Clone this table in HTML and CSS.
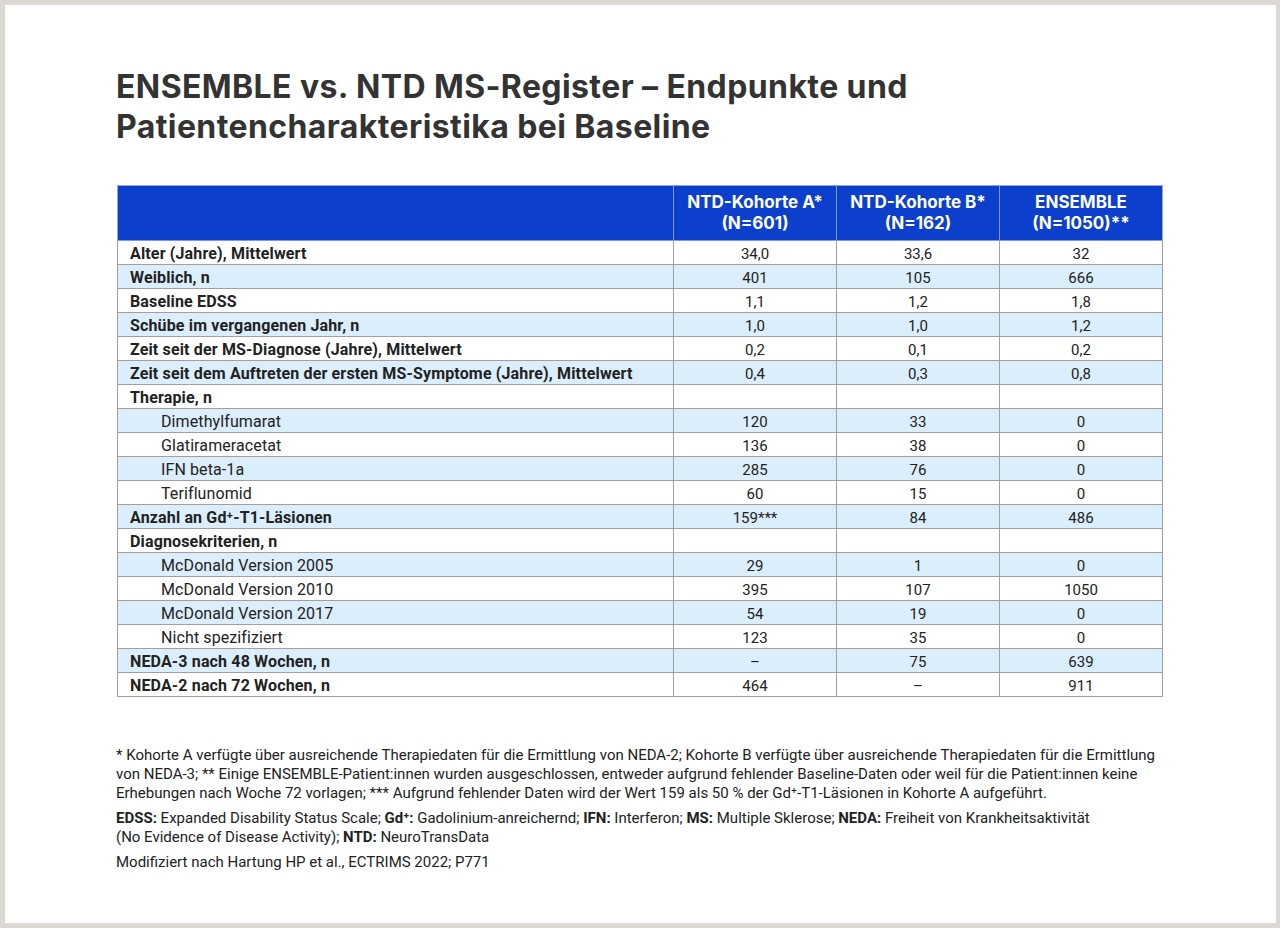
FILE: index.html
```html
<!DOCTYPE html>
<html lang="de">
<head>
<meta charset="utf-8">
<link rel="stylesheet" href="styles.css">
</head>
<body>
<div class="frame">
  <main class="card">
    <h1 class="title">ENSEMBLE vs. NTD MS-Register – Endpunkte und<br>Patientencharakteristika bei Baseline</h1>
    <table class="data">
      <thead>
        <tr>
          <th class="c-label"></th>
          <th>NTD-Kohorte A*<br>(N=601)</th>
          <th>NTD-Kohorte B*<br>(N=162)</th>
          <th>ENSEMBLE<br>(N=1050)**</th>
        </tr>
      </thead>
      <tbody>
        <tr><td class="lbl">Alter (Jahre), Mittelwert</td><td>34,0</td><td>33,6</td><td>32</td></tr>
        <tr><td class="lbl">Weiblich, n</td><td>401</td><td>105</td><td>666</td></tr>
        <tr><td class="lbl">Baseline EDSS</td><td>1,1</td><td>1,2</td><td>1,8</td></tr>
        <tr><td class="lbl">Schübe im vergangenen Jahr, n</td><td>1,0</td><td>1,0</td><td>1,2</td></tr>
        <tr><td class="lbl">Zeit seit der MS-Diagnose (Jahre), Mittelwert</td><td>0,2</td><td>0,1</td><td>0,2</td></tr>
        <tr><td class="lbl">Zeit seit dem Auftreten der ersten MS-Symptome (Jahre), Mittelwert</td><td>0,4</td><td>0,3</td><td>0,8</td></tr>
        <tr><td class="lbl">Therapie, n</td><td></td><td></td><td></td></tr>
        <tr><td class="sub">Dimethylfumarat</td><td>120</td><td>33</td><td>0</td></tr>
        <tr><td class="sub">Glatirameracetat</td><td>136</td><td>38</td><td>0</td></tr>
        <tr><td class="sub">IFN beta-1a</td><td>285</td><td>76</td><td>0</td></tr>
        <tr><td class="sub">Teriflunomid</td><td>60</td><td>15</td><td>0</td></tr>
        <tr><td class="lbl">Anzahl an Gd⁺-T1-Läsionen</td><td>159***</td><td>84</td><td>486</td></tr>
        <tr><td class="lbl">Diagnosekriterien, n</td><td></td><td></td><td></td></tr>
        <tr><td class="sub">McDonald Version 2005</td><td>29</td><td>1</td><td>0</td></tr>
        <tr><td class="sub">McDonald Version 2010</td><td>395</td><td>107</td><td>1050</td></tr>
        <tr><td class="sub">McDonald Version 2017</td><td>54</td><td>19</td><td>0</td></tr>
        <tr><td class="sub">Nicht spezifiziert</td><td>123</td><td>35</td><td>0</td></tr>
        <tr><td class="lbl">NEDA-3 nach 48 Wochen, n</td><td>–</td><td>75</td><td>639</td></tr>
        <tr><td class="lbl">NEDA-2 nach 72 Wochen, n</td><td>464</td><td>–</td><td>911</td></tr>
      </tbody>
    </table>
    <div class="notes">
      <p>* Kohorte A verfügte über ausreichende Therapiedaten für die Ermittlung von NEDA-2; Kohorte B verfügte über ausreichende Therapiedaten für die Ermittlung von NEDA-3; ** Einige ENSEMBLE-Patient:innen wurden ausgeschlossen, entweder aufgrund fehlender Baseline-Daten oder weil für die Patient:innen keine Erhebungen nach Woche 72 vorlagen; *** Aufgrund fehlender Daten wird der Wert 159 als 50 % der Gd⁺-T1-Läsionen in Kohorte A aufgeführt.</p>
      <p><b>EDSS:</b> Expanded Disability Status Scale; <b>Gd⁺:</b> Gadolinium-anreichernd; <b>IFN:</b> Interferon; <b>MS:</b> Multiple Sklerose; <b>NEDA:</b> Freiheit von Krankheitsaktivität<br>(No Evidence of Disease Activity); <b>NTD:</b> NeuroTransData</p>
      <p>Modifiziert nach Hartung HP et al., ECTRIMS 2022; P771</p>
    </div>
  </main>
</div>
</body>
</html>
```

FILE: styles.css
```css
* { box-sizing: border-box; }
html, body { margin: 0; padding: 0; }
body {
  background: #dcd8d3;
  font-family: Roboto, "Liberation Sans", sans-serif;
  color: #333;
}
.frame {
  width: 1280px;
  height: 928px;
  padding: 5px 4px 5px 5px;
}
.card {
  background: #fff;
  height: 918px;
  padding: 62px 112px 0 111px;
}
.title {
  margin: 0;
  font-family: Inter, "Liberation Sans", sans-serif;
  font-weight: 700;
  font-size: 32px;
  line-height: 40px;
  color: #333;
  letter-spacing: 0.4px;
}
.data {
  margin-top: 38px;
  margin-left: 1px;
  width: 1046px;
  border-collapse: collapse;
  font-size: 15px;
  color: #222;
}
.data th {
  background: #0c3fcb;
  color: #fff;
  font-family: Inter, "Liberation Sans", sans-serif;
  font-weight: 700;
  font-size: 17px;
  line-height: 21px;
  height: 55px;
  padding: 0;
  text-align: center;
  border: 1px solid #7f98d8;
  border-top-color: #9aa7c9;
  width: 163px;
}
.data th.c-label { width: auto; border-left-color: #9aa7c9; }
.data th:last-child { border-right-color: #9aa7c9; }
.data td {
  height: 24px;
  padding: 3px 0 0 0;
  border: 1px solid #a0a0a0;
  text-align: center;
  line-height: 20px;
}
.data tbody tr:nth-child(even) td { background: #dbeefc; }
.data td.lbl { text-align: left; padding-left: 12px; font-weight: 700; font-size: 16px; letter-spacing: 0.15px; }
.data td.sub { text-align: left; padding-left: 43px; font-size: 16px; letter-spacing: 0.1px; }
.notes {
  margin-top: 49px;
  font-size: 15px;
  line-height: 19px;
  color: #222;
}
.notes p { margin: 0 0 6px 0; }
.notes b { font-weight: 700; }
```
